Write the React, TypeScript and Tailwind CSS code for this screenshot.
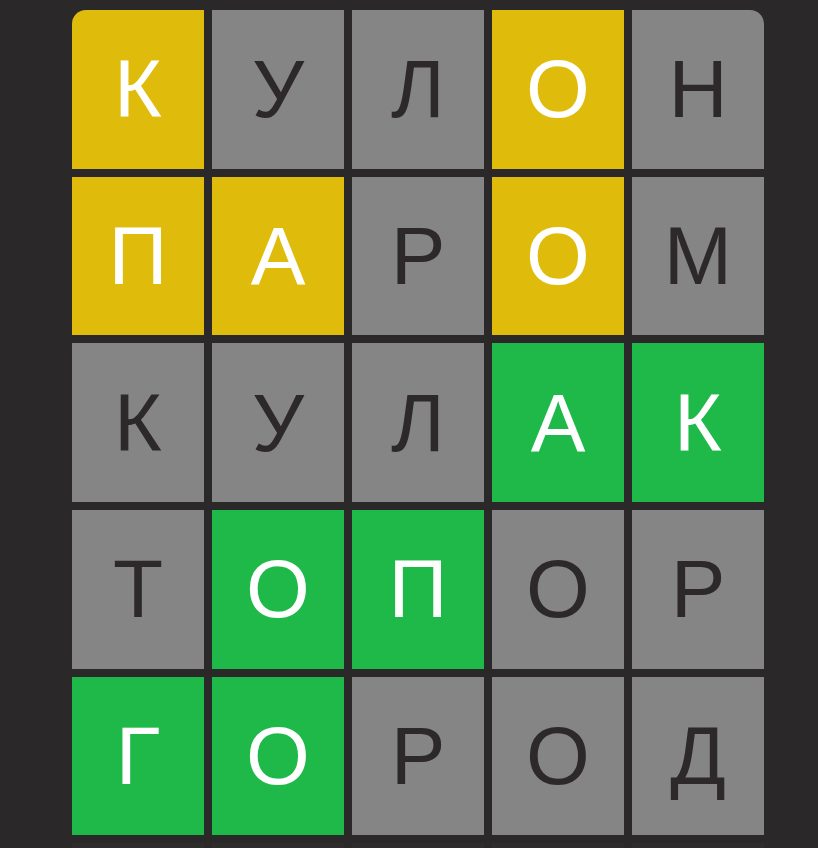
type Tile = { letter: string; state: "y" | "g" | "x" | "e" };

const rows: Tile[][] = [
  [
    { letter: "К", state: "y" },
    { letter: "У", state: "x" },
    { letter: "Л", state: "x" },
    { letter: "О", state: "y" },
    { letter: "Н", state: "x" },
  ],
  [
    { letter: "П", state: "y" },
    { letter: "А", state: "y" },
    { letter: "Р", state: "x" },
    { letter: "О", state: "y" },
    { letter: "М", state: "x" },
  ],
  [
    { letter: "К", state: "x" },
    { letter: "У", state: "x" },
    { letter: "Л", state: "x" },
    { letter: "А", state: "g" },
    { letter: "К", state: "g" },
  ],
  [
    { letter: "Т", state: "x" },
    { letter: "О", state: "g" },
    { letter: "П", state: "g" },
    { letter: "О", state: "x" },
    { letter: "Р", state: "x" },
  ],
  [
    { letter: "Г", state: "g" },
    { letter: "О", state: "g" },
    { letter: "Р", state: "x" },
    { letter: "О", state: "x" },
    { letter: "Д", state: "x" },
  ],
  [
    { letter: "", state: "e" },
    { letter: "", state: "e" },
    { letter: "", state: "e" },
    { letter: "", state: "e" },
    { letter: "", state: "e" },
  ],
];

const tileClass = {
  y: "bg-[#dfbb0b] text-white",
  g: "bg-[#1eb948] text-white",
  x: "bg-[#858585] text-[#2d292a]",
  e: "bg-[#2f2c2d]",
};

const App = () => {
  return (
    <div className="h-[848px] w-[818px] overflow-hidden bg-[#2a2829] pl-[72px] pt-[10px] font-['Liberation_Sans',Arial,sans-serif]">
      <div className="grid w-[692px] grid-cols-5 gap-x-[8px] gap-y-[8px] overflow-hidden rounded-[14px]">
        {rows.flat().map((tile, i) => (
          <div
            key={i}
            className={`flex h-[158.67px] items-center justify-center text-[82px] leading-none ${tileClass[tile.state]}`}
          >
            {tile.letter}
          </div>
        ))}
      </div>
    </div>
  );
};

export default App;
